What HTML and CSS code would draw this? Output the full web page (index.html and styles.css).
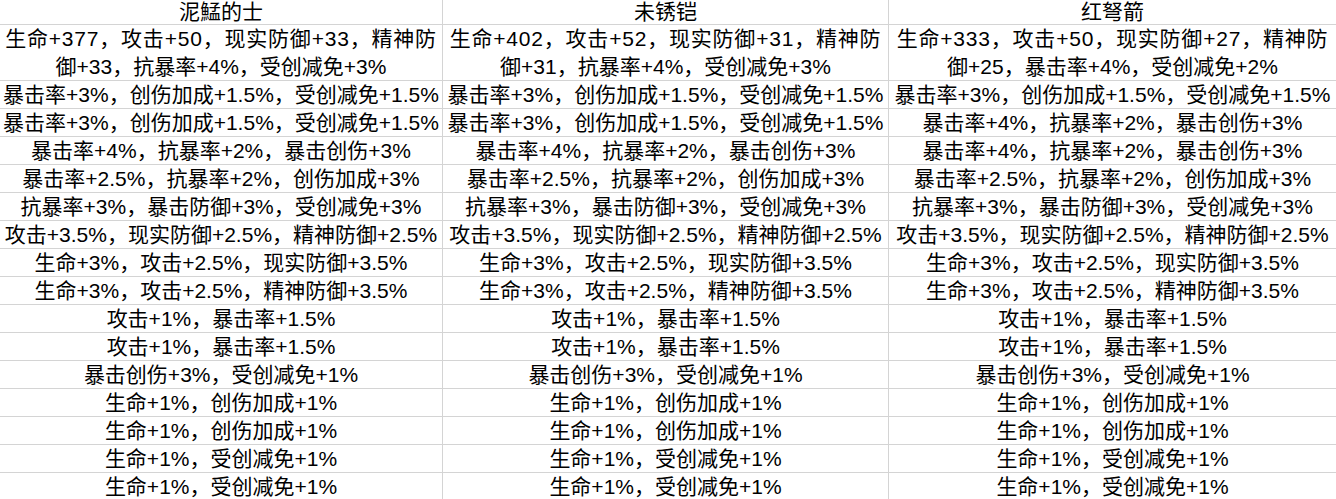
FILE: index.html
```html
<!DOCTYPE html>
<html lang="zh-CN">
<head>
<meta charset="utf-8">
<title>装备属性</title>
<link rel="stylesheet" href="styles.css">
</head>
<body>
<div class="sheet">
  <div class="cell head">泥鯭的士</div>
  <div class="cell head">未锈铠</div>
  <div class="cell head">红弩箭</div>

  <div class="cell tall"><span class="wide">生命+377，攻击+50，现实防御+33，精神防</span><br>御+33，抗暴率+4%，受创减免+3%</div>
  <div class="cell tall"><span class="wide">生命+402，攻击+52，现实防御+31，精神防</span><br>御+31，抗暴率+4%，受创减免+3%</div>
  <div class="cell tall"><span class="wide">生命+333，攻击+50，现实防御+27，精神防</span><br>御+25，暴击率+4%，受创减免+2%</div>

  <div class="cell">暴击率+3%，创伤加成+1.5%，受创减免+1.5%</div>
  <div class="cell">暴击率+3%，创伤加成+1.5%，受创减免+1.5%</div>
  <div class="cell">暴击率+3%，创伤加成+1.5%，受创减免+1.5%</div>

  <div class="cell">暴击率+3%，创伤加成+1.5%，受创减免+1.5%</div>
  <div class="cell">暴击率+3%，创伤加成+1.5%，受创减免+1.5%</div>
  <div class="cell">暴击率+4%，抗暴率+2%，暴击创伤+3%</div>

  <div class="cell">暴击率+4%，抗暴率+2%，暴击创伤+3%</div>
  <div class="cell">暴击率+4%，抗暴率+2%，暴击创伤+3%</div>
  <div class="cell">暴击率+4%，抗暴率+2%，暴击创伤+3%</div>

  <div class="cell">暴击率+2.5%，抗暴率+2%，创伤加成+3%</div>
  <div class="cell">暴击率+2.5%，抗暴率+2%，创伤加成+3%</div>
  <div class="cell">暴击率+2.5%，抗暴率+2%，创伤加成+3%</div>

  <div class="cell">抗暴率+3%，暴击防御+3%，受创减免+3%</div>
  <div class="cell">抗暴率+3%，暴击防御+3%，受创减免+3%</div>
  <div class="cell">抗暴率+3%，暴击防御+3%，受创减免+3%</div>

  <div class="cell">攻击+3.5%，现实防御+2.5%，精神防御+2.5%</div>
  <div class="cell">攻击+3.5%，现实防御+2.5%，精神防御+2.5%</div>
  <div class="cell">攻击+3.5%，现实防御+2.5%，精神防御+2.5%</div>

  <div class="cell">生命+3%，攻击+2.5%，现实防御+3.5%</div>
  <div class="cell">生命+3%，攻击+2.5%，现实防御+3.5%</div>
  <div class="cell">生命+3%，攻击+2.5%，现实防御+3.5%</div>

  <div class="cell">生命+3%，攻击+2.5%，精神防御+3.5%</div>
  <div class="cell">生命+3%，攻击+2.5%，精神防御+3.5%</div>
  <div class="cell">生命+3%，攻击+2.5%，精神防御+3.5%</div>

  <div class="cell">攻击+1%，暴击率+1.5%</div>
  <div class="cell">攻击+1%，暴击率+1.5%</div>
  <div class="cell">攻击+1%，暴击率+1.5%</div>

  <div class="cell">攻击+1%，暴击率+1.5%</div>
  <div class="cell">攻击+1%，暴击率+1.5%</div>
  <div class="cell">攻击+1%，暴击率+1.5%</div>

  <div class="cell">暴击创伤+3%，受创减免+1%</div>
  <div class="cell">暴击创伤+3%，受创减免+1%</div>
  <div class="cell">暴击创伤+3%，受创减免+1%</div>

  <div class="cell">生命+1%，创伤加成+1%</div>
  <div class="cell">生命+1%，创伤加成+1%</div>
  <div class="cell">生命+1%，创伤加成+1%</div>

  <div class="cell">生命+1%，创伤加成+1%</div>
  <div class="cell">生命+1%，创伤加成+1%</div>
  <div class="cell">生命+1%，创伤加成+1%</div>

  <div class="cell">生命+1%，受创减免+1%</div>
  <div class="cell">生命+1%，受创减免+1%</div>
  <div class="cell">生命+1%，受创减免+1%</div>

  <div class="cell">生命+1%，受创减免+1%</div>
  <div class="cell">生命+1%，受创减免+1%</div>
  <div class="cell">生命+1%，受创减免+1%</div>
</div>
</body>
</html>
```

FILE: styles.css
```css
html, body {
  margin: 0;
  padding: 0;
  background: #ffffff;
}

.sheet {
  display: grid;
  grid-template-columns: 443px 446px 447px;
  width: 1336px;
  font-family: "Liberation Sans", "Noto Sans CJK SC", sans-serif;
  font-size: 21px;
  color: #000000;
}

.cell {
  box-sizing: border-box;
  height: 28px;
  line-height: 27px;
  text-align: center;
  white-space: nowrap;
  overflow: hidden;
  border-bottom: 1px solid #d4d4d4;
  border-right: 1px solid #d4d4d4;
}

.cell:nth-child(3n) {
  border-right: none;
}

.head {
  height: 25px;
  line-height: 24px;
}

.tall {
  height: 56px;
  line-height: 27.5px;
}

.wide {
  letter-spacing: 0.8px;
}
```
